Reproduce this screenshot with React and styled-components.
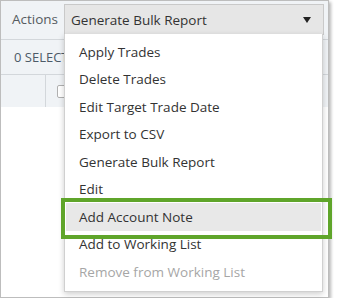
import React from "react";
import styled, { createGlobalStyle } from "styled-components";

const Global = createGlobalStyle`
  html, body { margin: 0; padding: 0; background: #ffffff; }
  body { font-family: "Open Sans", "Noto Sans", Arial, sans-serif; }
  * { box-sizing: border-box; }
`;

const Frame = styled.div`
  position: relative;
  width: 329px;
  height: 298px;
  border: 1px solid #bdbdbd;
  background: #ffffff;
  box-shadow: 2px 2px 3px rgba(0, 0, 0, 0.28);
  display: flex;
  flex-direction: column;
  overflow: visible;
`;

const Toolbar = styled.div`
  height: 39px;
  display: flex;
  align-items: flex-start;
  background: #f0f3f6;
  border-bottom: 1px solid #d3d7db;
  padding: 3px 0 0 11px;
`;

const Label = styled.span`
  font-size: 13.5px;
  color: #555b61;
  line-height: 30px;
  width: 52px;
`;

const Trigger = styled.div`
  width: 260px;
  height: 31px;
  background: #e6e6e6;
  border: 1px solid #c9c9c9;
  display: flex;
  align-items: center;
  justify-content: space-between;
  padding: 0 12px 0 6px;
  font-size: 13.5px;
  color: #333;
`;

const Caret = styled.span`
  width: 0;
  height: 0;
  border-left: 4px solid transparent;
  border-right: 4px solid transparent;
  border-top: 6px solid #222;
`;

const SelectedRow = styled.div`
  height: 35px;
  display: flex;
  align-items: center;
  background: #f0f3f6;
  border-bottom: 1px solid #d3d7db;
  padding-left: 13px;
  font-size: 13px;
  color: #4d5a68;
  overflow: hidden;
  white-space: nowrap;
`;

const HeaderRow = styled.div`
  height: 32px;
  display: flex;
  background: #f0f3f6;
`;

const Cell = styled.div`
  width: ${(p) => p.$w}px;
  border-right: ${(p) => (p.$line ? "1px solid #d3d7db" : "none")};
  display: flex;
  align-items: center;
  padding-left: ${(p) => p.$pad || 0}px;
`;

const Checkbox = styled.span`
  width: 13px;
  height: 13px;
  border: 1px solid #b0b0b0;
  border-radius: 2px;
  background: #fff;
`;

const Body = styled.div`
  flex: 1;
  background: #ffffff;
`;

const Menu = styled.ul`
  position: absolute;
  left: 63px;
  top: 33px;
  width: 259px;
  height: 258px;
  margin: 0;
  padding: 4px 0 0;
  list-style: none;
  background: #fff;
  border: 1px solid #d0d0d0;
  border-top: none;
  box-shadow: 0 2px 6px rgba(0, 0, 0, 0.2);
`;

const Item = styled.li`
  height: 27.5px;
  margin: 0 1px;
  padding-left: 13px;
  display: flex;
  align-items: center;
  font-size: 13.5px;
  color: ${(p) => (p.$disabled ? "#a6a6a6" : "#333")};
  background: ${(p) => (p.$active ? "#e8e8e8" : "transparent")};
  white-space: nowrap;
`;

const Highlight = styled.div`
  position: absolute;
  left: 60px;
  top: 197px;
  width: 271px;
  height: 41px;
  border: 4px solid #5fa52a;
  pointer-events: none;
`;

const items = [
  { t: "Apply Trades" },
  { t: "Delete Trades" },
  { t: "Edit Target Trade Date" },
  { t: "Export to CSV" },
  { t: "Generate Bulk Report" },
  { t: "Edit" },
  { t: "Add Account Note", active: true },
  { t: "Add to Working List" },
  { t: "Remove from Working List", disabled: true },
];

export default function App() {
  return (
    <>
      <Global />
      <Frame>
        <Toolbar>
          <Label>Actions</Label>
          <Trigger>
            <span>Generate Bulk Report</span>
            <Caret />
          </Trigger>
        </Toolbar>
        <SelectedRow>0 SELECTED</SelectedRow>
        <HeaderRow>
          <Cell $w={45} $line />
          <Cell $w={60} $pad={11}>
            <Checkbox />
          </Cell>
        </HeaderRow>
        <Body />
        <Menu>
          {items.map((it) => (
            <Item key={it.t} $active={it.active} $disabled={it.disabled}>
              {it.t}
            </Item>
          ))}
        </Menu>
        <Highlight />
      </Frame>
    </>
  );
}
